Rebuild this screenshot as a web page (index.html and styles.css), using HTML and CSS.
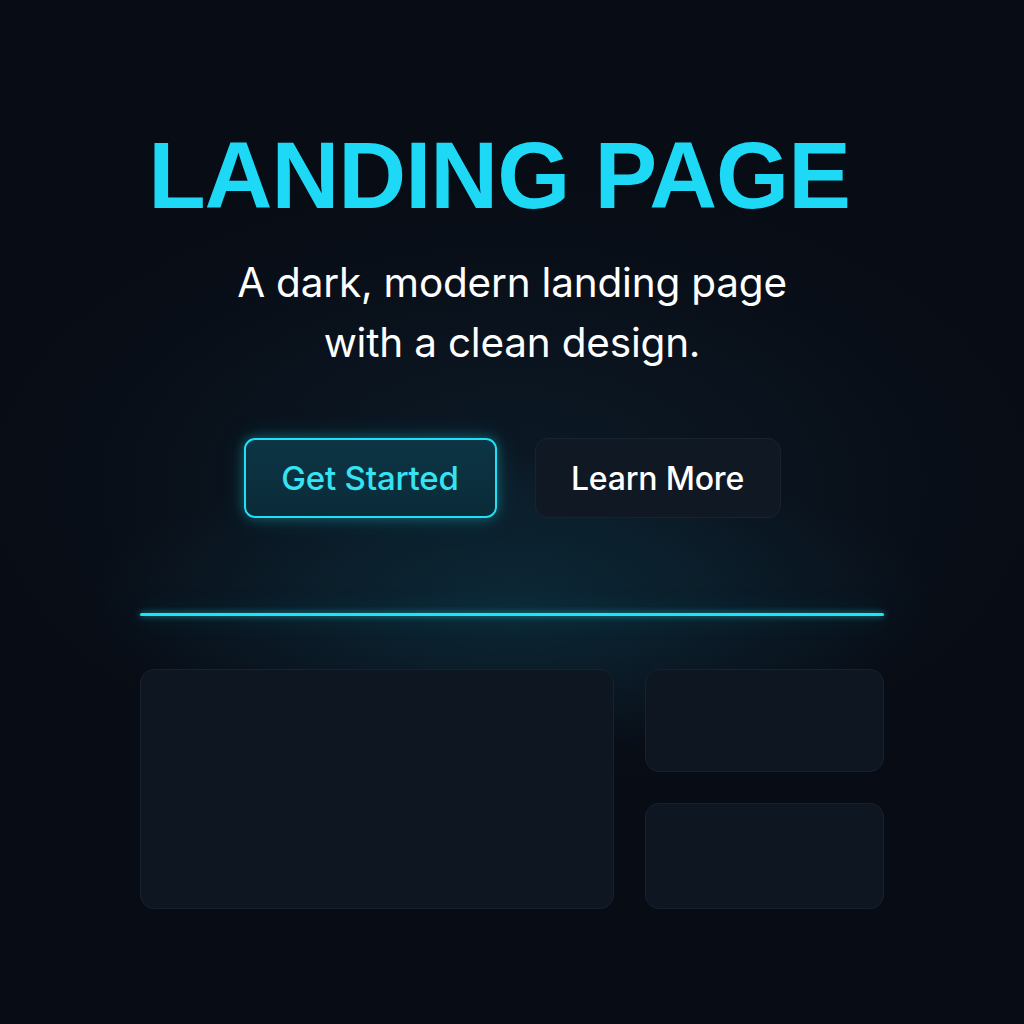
FILE: index.html
```html
<!DOCTYPE html>
<html lang="en">
<head>
<meta charset="utf-8">
<title>Landing Page</title>
<link rel="stylesheet" href="styles.css">
</head>
<body>
<main class="page">
  <section class="hero">
    <h1 class="title">LANDING PAGE</h1>
    <p class="subtitle">A dark, modern landing page<br>with a clean design.</p>
    <div class="actions">
      <a class="btn btn-primary" href="#">Get Started</a>
      <a class="btn btn-secondary" href="#">Learn More</a>
    </div>
  </section>
  <div class="divider"></div>
  <section class="grid">
    <div class="card card-large"></div>
    <div class="side">
      <div class="card card-top"></div>
      <div class="card card-bottom"></div>
    </div>
  </section>
</main>
</body>
</html>
```
FILE: styles.css
```css
* { box-sizing: border-box; }
html, body { margin: 0; padding: 0; }
body {
  width: 1024px;
  height: 1024px;
  overflow: hidden;
  background:
    radial-gradient(ellipse 430px 150px at 512px 605px, rgba(14, 72, 92, 0.38), rgba(14, 72, 92, 0) 100%),
    radial-gradient(ellipse 520px 300px at 512px 485px, rgba(16, 42, 58, 0.45), rgba(16, 42, 58, 0) 100%),
    #080c15;
  font-family: Inter, "Noto Sans", sans-serif;
}
.page {
  width: 744px;
  margin: 0 auto;
  padding-top: 126px;
}
.hero {
  display: flex;
  flex-direction: column;
  align-items: center;
}
.title {
  margin: 0 26px 0 0;
  font-family: "Liberation Sans", Arial, sans-serif;
  font-weight: 700;
  font-size: 94px;
  line-height: 100px;
  letter-spacing: -1px;
  color: #1dd9f6;
}
.subtitle {
  margin: 27px 0 0;
  font-size: 40.5px;
  line-height: 60px;
  font-weight: 400;
  color: #ffffff;
  text-align: center;
  letter-spacing: -0.2px;
}
.actions {
  display: flex;
  gap: 38px;
  margin-top: 65px;
}
.btn {
  display: flex;
  align-items: center;
  justify-content: center;
  height: 80px;
  font-size: 32px;
  font-weight: 500;
  text-decoration: none;
  border-radius: 11px;
  letter-spacing: -0.2px;
}
.btn-primary {
  width: 253px;
  font-size: 33px;
  color: #35e3f3;
  background: linear-gradient(180deg, #0d3545, #0a2b38);
  border: 2px solid #1fe0f4;
  box-shadow: 0 0 12px rgba(31, 224, 244, 0.35), 0 0 30px rgba(31, 224, 244, 0.12);
}
.btn-secondary {
  width: 246px;
  color: #ffffff;
  background: #101923;
  border: 1px solid #19232f;
  border-radius: 13px;
}
.divider {
  height: 3px;
  margin-top: 95px;
  background: #1fe4f5;
  border-radius: 2px;
  box-shadow: 0 0 6px rgba(31, 228, 245, 0.6), 0 0 24px rgba(31, 228, 245, 0.25);
}
.grid {
  display: grid;
  grid-template-columns: 474px 239px;
  gap: 31px;
  margin-top: 53px;
}
.side {
  display: flex;
  flex-direction: column;
  gap: 31px;
}
.card {
  background: #0e1622;
  border: 1px solid #18212e;
  border-radius: 14px;
}
.card-large { height: 240px; }
.card-top { height: 103px; }
.card-bottom { height: 106px; }
```
